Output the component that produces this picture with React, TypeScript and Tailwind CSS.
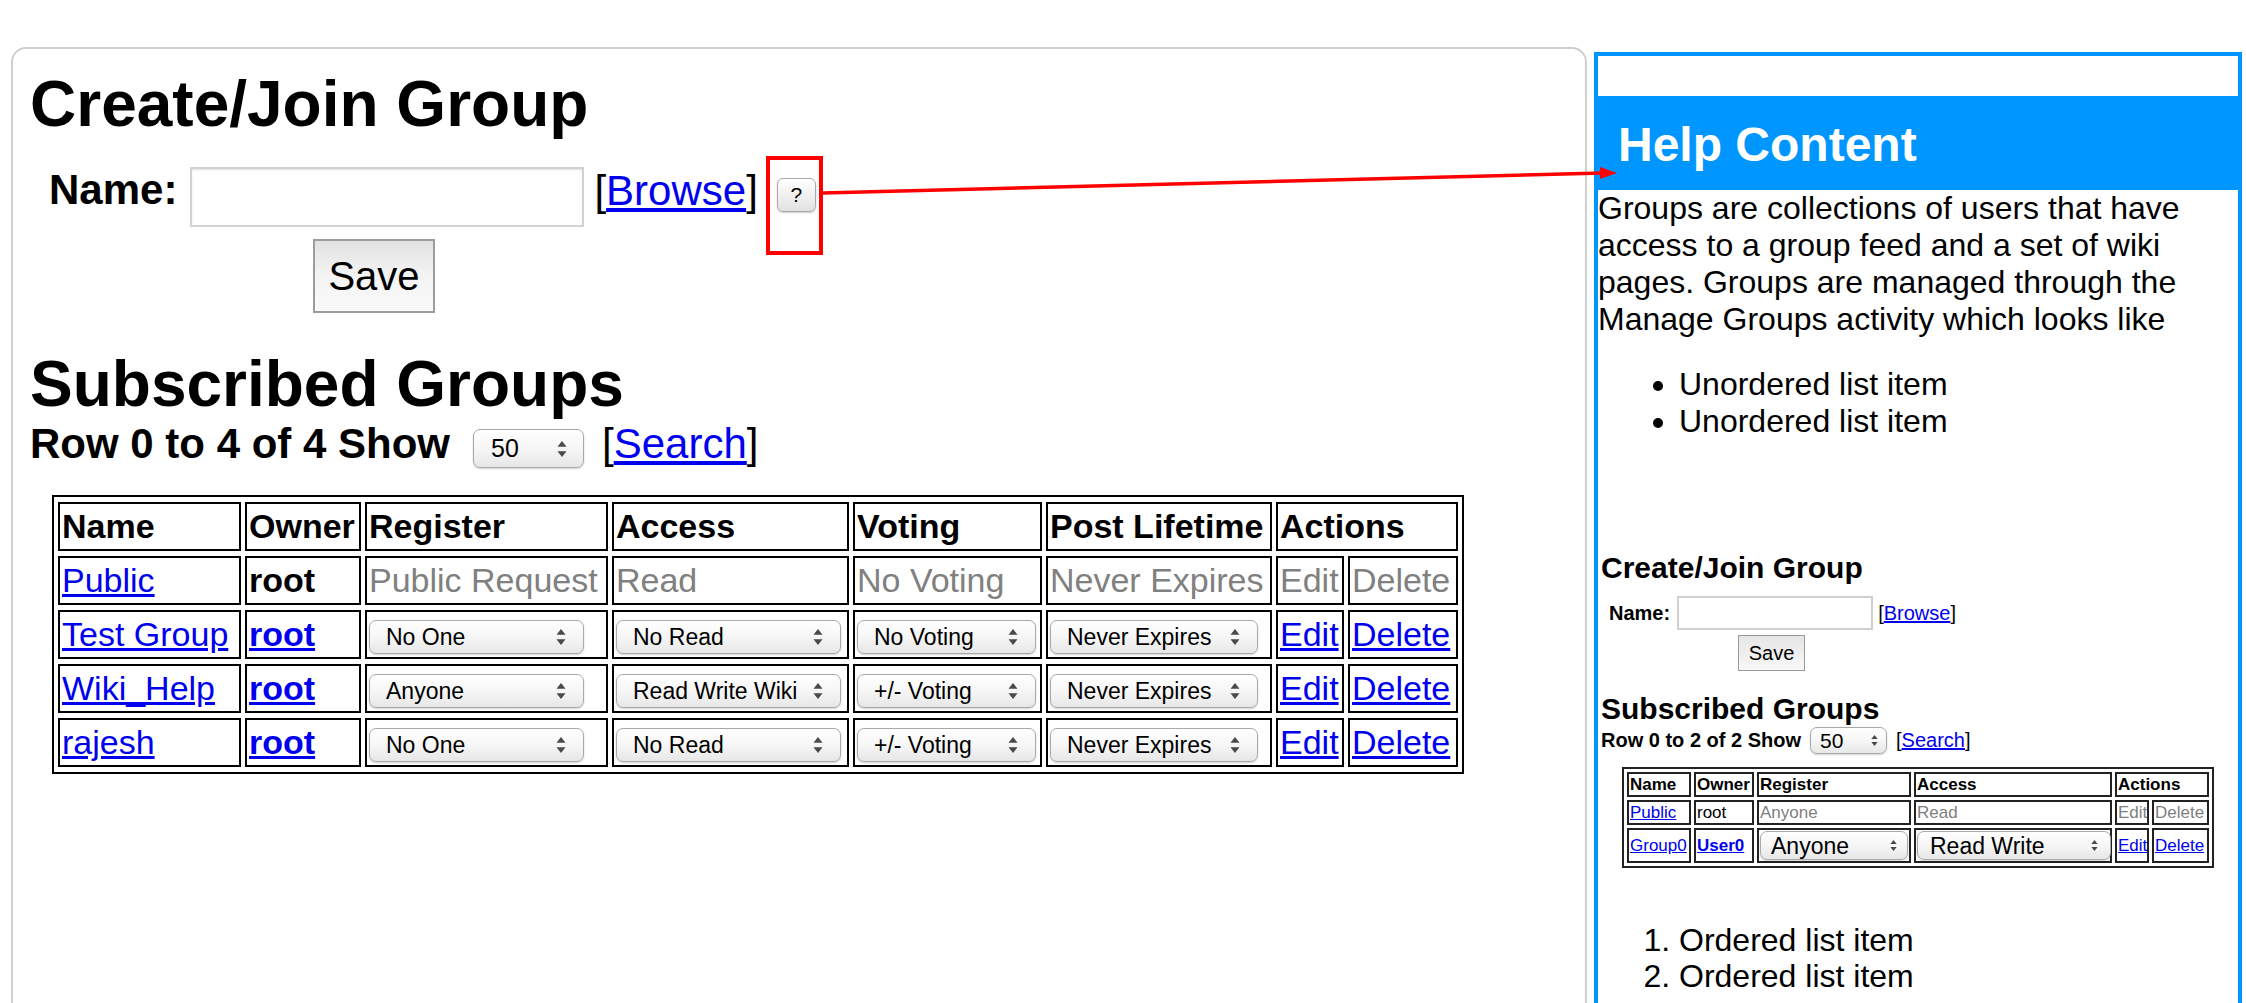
import React from 'react';

const FONT = "[font-family:'Liberation_Sans',Arial,Helvetica,sans-serif]";
const LINK = 'text-[#0000ee] underline';
const GRAY = 'text-[#808080]';

function Arrows({ className }: { className: string }) {
  return (
    <svg viewBox="0 0 8 14" className={className}>
      <path d="M4 0.6L7.6 5.2H0.4Z" fill="#4a4a4a" />
      <path d="M4 13.4L0.4 8.8H7.6Z" fill="#4a4a4a" />
    </svg>
  );
}

function Select({ label, className, arrowClass = 'w-[10px] h-[18px]' }: { label: string; className: string; arrowClass?: string }) {
  return (
    <span
      className={[
        'inline-flex items-center justify-between align-middle shrink-0 whitespace-nowrap text-black',
        'rounded-[7px] border border-[#a9a9a9] bg-linear-to-b from-white via-[#f6f6f6] to-[#e7e7e7]',
        'shadow-[0_1px_2px_rgba(0,0,0,0.18)]',
        className,
      ].join(' ')}
    >
      <span>{label}</span>
      <Arrows className={arrowClass} />
    </span>
  );
}

type Row = {
  name: string;
  owner: string;
  register: string;
  access: string;
  voting: string;
  lifetime: string;
  locked?: boolean;
};

const ROWS: Row[] = [
  { name: 'Public', owner: 'root', register: 'Public Request', access: 'Read', voting: 'No Voting', lifetime: 'Never Expires', locked: true },
  { name: 'Test Group', owner: 'root', register: 'No One', access: 'No Read', voting: 'No Voting', lifetime: 'Never Expires' },
  { name: 'Wiki_Help', owner: 'root', register: 'Anyone', access: 'Read Write Wiki', voting: '+/- Voting', lifetime: 'Never Expires' },
  { name: 'rajesh', owner: 'root', register: 'No One', access: 'No Read', voting: '+/- Voting', lifetime: 'Never Expires' },
];

const TD = 'h-[49px] border-2 border-black p-[2px] text-left align-middle whitespace-nowrap leading-[41px]';
const SEL = 'h-[34px] pl-[16px] pr-[17px] text-[23px] leading-[26px]';

function GroupsTable() {
  return (
    <table className="mt-[27px] ml-[22px] w-[1412px] table-fixed border-separate [border-spacing:4px_5px] border-2 border-black text-[34px]">
      <colgroup>
        <col className="w-[183px]" />
        <col className="w-[116px]" />
        <col className="w-[243px]" />
        <col className="w-[237px]" />
        <col className="w-[189px]" />
        <col className="w-[226px]" />
        <col className="w-[68px]" />
        <col className="w-[110px]" />
      </colgroup>
      <thead>
        <tr className="font-bold">
          <th className={TD}>Name</th>
          <th className={TD}>Owner</th>
          <th className={TD}>Register</th>
          <th className={TD}>Access</th>
          <th className={TD}>Voting</th>
          <th className={TD}>Post Lifetime</th>
          <th className={TD} colSpan={2}>Actions</th>
        </tr>
      </thead>
      <tbody>
        {ROWS.map((r) =>
          r.locked ? (
            <tr key={r.name}>
              <td className={TD}><a className={LINK}>{r.name}</a></td>
              <td className={`${TD} font-bold`}>{r.owner}</td>
              <td className={`${TD} ${GRAY}`}>{r.register}</td>
              <td className={`${TD} ${GRAY}`}>{r.access}</td>
              <td className={`${TD} ${GRAY}`}>{r.voting}</td>
              <td className={`${TD} ${GRAY}`}>{r.lifetime}</td>
              <td className={`${TD} ${GRAY}`}>Edit</td>
              <td className={`${TD} ${GRAY}`}>Delete</td>
            </tr>
          ) : (
            <tr key={r.name}>
              <td className={TD}><a className={LINK}>{r.name}</a></td>
              <td className={TD}><a className={`${LINK} font-bold`}>{r.owner}</a></td>
              <td className={TD}><Select label={r.register} className={`w-[215px] ${SEL}`} /></td>
              <td className={TD}><Select label={r.access} className={`w-[225px] ${SEL}`} /></td>
              <td className={TD}><Select label={r.voting} className={`w-[179px] ${SEL}`} /></td>
              <td className={TD}><Select label={r.lifetime} className={`w-[208px] ${SEL}`} /></td>
              <td className={TD}><a className={LINK}>Edit</a></td>
              <td className={TD}><a className={LINK}>Delete</a></td>
            </tr>
          )
        )}
      </tbody>
    </table>
  );
}

function LeftPanel() {
  return (
    <div className="ml-[11px] mt-[47px] w-[1576px] h-[1000px] shrink-0 rounded-[15px] border-2 border-[#cfcfcf] pl-[17px] pt-[19px]">
      <h1 className="text-[64px] font-bold leading-[72px]">Create/Join Group</h1>

      <div className="mt-[27px] ml-[19px] flex items-start">
        <span className="-mt-px text-[42px] font-bold leading-[48px]">Name:</span>
        <input className="ml-[13px] w-[394px] h-[60px] border-2 border-[#d2d2d2] bg-white shadow-[inset_0_1px_2px_rgba(0,0,0,0.12)]" />
        <span className="ml-[10px] text-[42px] leading-[48px]">
          [<a className={LINK}>Browse</a>]
        </span>
        <button className="ml-[19px] mt-[11px] flex w-[39px] h-[34px] items-center justify-center rounded-[6px] border border-[#a9a9a9] bg-linear-to-b from-white to-[#e2e2e2] text-[21px] shadow-[0_1px_2px_rgba(0,0,0,0.2)]">
          ?
        </button>
      </div>

      <div className="mt-[12px] ml-[283px]">
        <button className="flex w-[122px] h-[74px] items-center justify-center border-2 border-[#9c9c9c] bg-linear-to-b from-[#e2e2e2] via-[#f4f4f4] to-[#f9f9f9] text-[40px]">
          Save
        </button>
      </div>

      <h1 className="mt-[35px] text-[64px] font-bold leading-[72px]">Subscribed Groups</h1>
      <div className="flex items-start">
        <span className="text-[42px] font-bold leading-[48px]">Row 0 to 4 of 4 Show</span>
        <Select label="50" className="ml-[23px] mt-[9px] w-[111px] h-[39px] pl-[17px] pr-[16px] text-[25px]" />
        <span className="ml-[18px] text-[42px] leading-[48px]">
          [<a className={LINK}>Search</a>]
        </span>
      </div>

      <GroupsTable />
    </div>
  );
}

const MTD = 'border-2 border-[#222] px-[1px] text-left align-middle whitespace-nowrap leading-[20px]';

function MiniPage() {
  return (
    <div className="mt-[111px] pl-[3px]">
      <div className="text-[30px] font-bold leading-[34px]">Create/Join Group</div>
      <div className="mt-[11px] ml-[8px] flex h-[34px] items-center">
        <span className="text-[20px] font-bold leading-[23px]">Name:</span>
        <span className="ml-[7px] w-[196px] h-[34px] border-2 border-[#cfcfcf] bg-white" />
        <span className="ml-[5px] text-[20px] leading-[23px]">
          [<a className={LINK}>Browse</a>]
        </span>
      </div>
      <div className="mt-[5px] ml-[137px] flex w-[67px] h-[36px] items-center justify-center border border-[#999] bg-linear-to-b from-[#e6e6e6] to-[#f8f8f8] text-[20px]">
        Save
      </div>
      <div className="mt-[21px] text-[30px] font-bold leading-[34px]">Subscribed Groups</div>
      <div className="mt-[1px] flex h-[27px] items-center">
        <span className="text-[20px] font-bold leading-[23px]">Row 0 to 2 of 2 Show</span>
        <Select label="50" className="ml-[9px] w-[77px] h-[27px] pl-[9px] pr-[8px] text-[21px]" arrowClass="w-[7px] h-[13px]" />
        <span className="ml-[9px] text-[20px] leading-[23px]">
          [<a className={LINK}>Search</a>]
        </span>
      </div>
      <table className="mt-[13px] ml-[21px] w-[592px] table-fixed border-separate [border-spacing:3px] border-2 border-[#222] text-[17px]">
        <colgroup>
          <col className="w-[64px]" />
          <col className="w-[60px]" />
          <col className="w-[154px]" />
          <col className="w-[198px]" />
          <col className="w-[34px]" />
          <col className="w-[57px]" />
        </colgroup>
        <tbody>
          <tr className="h-[25px] font-bold">
            <td className={MTD}>Name</td>
            <td className={MTD}>Owner</td>
            <td className={MTD}>Register</td>
            <td className={MTD}>Access</td>
            <td className={MTD} colSpan={2}>Actions</td>
          </tr>
          <tr className="h-[25px]">
            <td className={MTD}><a className={LINK}>Public</a></td>
            <td className={MTD}>root</td>
            <td className={`${MTD} ${GRAY}`}>Anyone</td>
            <td className={`${MTD} ${GRAY}`}>Read</td>
            <td className={`${MTD} ${GRAY}`}>Edit</td>
            <td className={`${MTD} ${GRAY}`}>Delete</td>
          </tr>
          <tr className="h-[35px]">
            <td className={MTD}><a className={LINK}>Group0</a></td>
            <td className={MTD}><a className={`${LINK} font-bold`}>User0</a></td>
            <td className={MTD}>
              <Select label="Anyone" className="w-[148px] h-[29px] pl-[10px] pr-[10px] text-[23px]" arrowClass="w-[7px] h-[13px]" />
            </td>
            <td className={MTD}>
              <Select label="Read Write" className="w-[194px] h-[29px] pl-[12px] pr-[12px] text-[23px]" arrowClass="w-[7px] h-[13px]" />
            </td>
            <td className={MTD}><a className={LINK}>Edit</a></td>
            <td className={MTD}><a className={LINK}>Delete</a></td>
          </tr>
        </tbody>
      </table>
    </div>
  );
}

function HelpPanel() {
  return (
    <div className="ml-[7px] mt-[52px] w-[648px] h-[1000px] shrink-0 border-4 border-[#0096ff]">
      <div className="h-[40px]" />
      <div className="h-[94px] bg-[#0096ff] pl-[20px] pt-[21px]">
        <h2 className="text-[48px] font-bold leading-[55px] text-white">Help Content</h2>
      </div>
      <p className="text-[32px] leading-[37px]">
        Groups are collections of users that have access to a group feed and a set of wiki pages. Groups are managed
        through the Manage Groups activity which looks like
      </p>
      <ul className="mt-[28px] list-disc pl-[81px] text-[32px] leading-[37px]">
        <li>Unordered list item</li>
        <li>Unordered list item</li>
      </ul>

      <MiniPage />

      <ol className="mt-[54px] list-decimal pl-[81px] text-[32px] leading-[36px]">
        <li>Ordered list item</li>
        <li>Ordered list item</li>
      </ol>
    </div>
  );
}

// red callout drawn over the page: box round the help button and an arrow to the panel
function Annotation() {
  return (
    <svg className="pointer-events-none absolute left-0 top-0" width={2246} height={1003}>
      <rect x={768} y={158} width={53} height={95} fill="none" stroke="#ff0000" strokeWidth={4} />
      <line x1={823} y1={193} x2={1603} y2={173} stroke="#ff0000" strokeWidth={3.5} />
      <polygon points="1600,167 1617,173 1600,179" fill="#ff0000" />
    </svg>
  );
}

export default function App() {
  return (
    <div className={`relative flex h-[1003px] w-[2246px] items-start overflow-hidden bg-white text-black ${FONT}`}>
      <LeftPanel />
      <HelpPanel />
      <Annotation />
    </div>
  );
}
